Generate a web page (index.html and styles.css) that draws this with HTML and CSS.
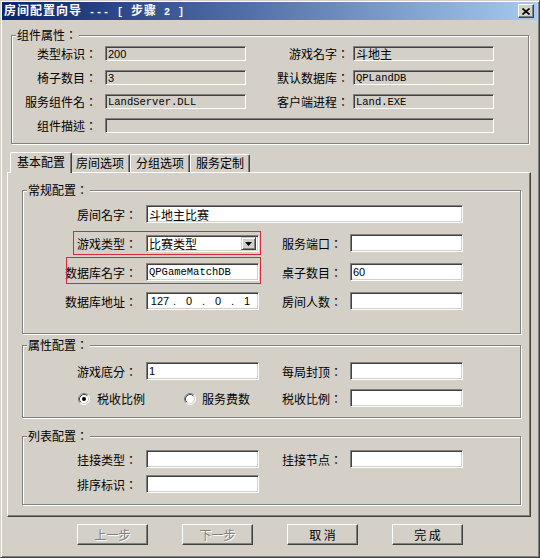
FILE: index.html
```html
<!DOCTYPE html>
<html>
<head>
<meta charset="utf-8">
<link rel="stylesheet" href="styles.css">
</head>
<body>
<div class="window">
  <div class="titlebar">
    <span class="title"><span class="tc">房间配置向导</span> --- [ <span class="tc">步骤</span> 2 ]</span>
    <span class="close"><svg width="8" height="7" viewBox="0 0 8 7"><path d="M0.5 0.5 L7.5 6.5 M7.5 0.5 L0.5 6.5" stroke="#000" stroke-width="1.6" fill="none"/></svg></span>
  </div>

  <div class="group group-top">
    <div class="group-title">组件属性：</div>
    <div class="grid grid-top">
      <div class="lbl">类型标识：</div><div class="field ro num">200</div>
      <div class="lbl lbl-r">游戏名字：</div><div class="field ro">斗地主</div>
      <div class="lbl">椅子数目：</div><div class="field ro num">3</div>
      <div class="lbl lbl-r">默认数据库：</div><div class="field ro mono">QPLandDB</div>
      <div class="lbl">服务组件名：</div><div class="field ro mono">LandServer.DLL</div>
      <div class="lbl lbl-r">客户端进程：</div><div class="field ro mono">Land.EXE</div>
      <div class="lbl">组件描述：</div><div class="field ro span3"></div>
    </div>
  </div>

  <div class="tabs">
    <div class="tab active">基本配置</div>
    <div class="tab">房间选项</div>
    <div class="tab">分组选项</div>
    <div class="tab">服务定制</div>
  </div>

  <div class="panel">
    <div class="group g-normal">
      <div class="group-title">常规配置：</div>
      <div class="grid grid-tab grid-normal">
        <div class="lbl">房间名字：</div><div class="field span3">斗地主比赛</div>
        <div class="lbl">游戏类型：</div>
        <div class="combo"><span class="combo-text">比赛类型</span><span class="combo-btn"><svg width="7" height="4" viewBox="0 0 7 4"><path d="M0 0 H7 L3.5 4 Z" fill="#000"/></svg></span></div>
        <div class="lbl lbl-r">服务端口：</div><div class="field"></div>
        <div class="lbl">数据库名字：</div><div class="field mono">QPGameMatchDB</div>
        <div class="lbl lbl-r">桌子数目：</div><div class="field num">60</div>
        <div class="lbl">数据库地址：</div>
        <div class="field ip num"><span class="seg">127</span><span class="dot">.</span><span class="seg">0</span><span class="dot">.</span><span class="seg">0</span><span class="dot">.</span><span class="seg">1</span></div>
        <div class="lbl lbl-r">房间人数：</div><div class="field"></div>
      </div>
      <div class="mark mark-1"></div>
      <div class="mark mark-2"></div>
    </div>

    <div class="group g-attr">
      <div class="group-title">属性配置：</div>
      <div class="grid grid-tab grid-attr">
        <div class="lbl">游戏底分：</div><div class="field num">1</div>
        <div class="lbl lbl-r">每局封顶：</div><div class="field"></div>
        <div class="radios">
          <span class="radio"><svg width="12" height="12" viewBox="0 0 12 12"><circle cx="6" cy="6" r="5" fill="#fff"/><path d="M2.11 9.89 A5.5 5.5 0 0 1 9.89 2.11" stroke="#808080" fill="none"/><path d="M9.89 2.11 A5.5 5.5 0 0 1 2.11 9.89" stroke="#fff" fill="none"/><path d="M2.82 9.18 A4.5 4.5 0 0 1 9.18 2.82" stroke="#404040" fill="none"/><path d="M9.18 2.82 A4.5 4.5 0 0 1 2.82 9.18" stroke="#D4D0C8" fill="none"/><circle cx="6" cy="6" r="2" fill="#000"/></svg><span>税收比例</span></span>
          <span class="radio radio-2"><svg width="12" height="12" viewBox="0 0 12 12"><circle cx="6" cy="6" r="5" fill="#fff"/><path d="M2.11 9.89 A5.5 5.5 0 0 1 9.89 2.11" stroke="#808080" fill="none"/><path d="M9.89 2.11 A5.5 5.5 0 0 1 2.11 9.89" stroke="#fff" fill="none"/><path d="M2.82 9.18 A4.5 4.5 0 0 1 9.18 2.82" stroke="#404040" fill="none"/><path d="M9.18 2.82 A4.5 4.5 0 0 1 2.82 9.18" stroke="#D4D0C8" fill="none"/></svg><span>服务费数</span></span>
        </div>
        <div class="lbl lbl-r">税收比例：</div><div class="field"></div>
      </div>
    </div>

    <div class="group g-list">
      <div class="group-title">列表配置：</div>
      <div class="grid grid-tab grid-list">
        <div class="lbl">挂接类型：</div><div class="field"></div>
        <div class="lbl lbl-r">挂接节点：</div><div class="field"></div>
        <div class="lbl">排序标识：</div><div class="field"></div>
      </div>
    </div>
  </div>

  <div class="buttons">
    <div class="btn disabled">上一步</div>
    <div class="btn disabled">下一步</div>
    <div class="btn">取 消</div>
    <div class="btn">完 成</div>
  </div>
</div>
</body>
</html>
```

FILE: styles.css
```css
* { box-sizing: border-box; }
html, body { margin: 0; padding: 0; }
body {
  width: 540px;
  height: 558px;
  background: #D4D0C8;
  font-family: "Noto Sans CJK SC", "Liberation Sans", sans-serif;
  font-size: 12px;
  color: #000;
  overflow: hidden;
}
.window {
  width: 540px;
  height: 558px;
  border: 1px solid;
  border-color: #D4D0C8 #404040 #404040 #D4D0C8;
  box-shadow: inset 1px 1px 0 #fff, inset -1px -1px 0 #808080;
  padding: 1px 2px 2px 1px;
  display: flex;
  flex-direction: column;
}
.titlebar {
  height: 18px;
  flex: none;
  background: linear-gradient(to right, #0A246A, #A6CAF0);
  display: flex;
  align-items: center;
  justify-content: space-between;
  padding: 0 3px 0 2px;
  color: #fff;
  font-weight: bold;
  line-height: 18px;
}
.title {
  white-space: pre;
  font-family: "Liberation Mono", "Noto Sans CJK SC", monospace;
  font-size: 10px;
  letter-spacing: 1px;
}
.title .tc {
  font-family: "Noto Sans CJK SC", sans-serif;
  font-size: 12px;
}
.close {
  width: 16px;
  height: 14px;
  background: #D4D0C8;
  border: 1px solid;
  border-color: #fff #404040 #404040 #fff;
  box-shadow: inset -1px -1px 0 #808080;
  display: flex;
  align-items: center;
  justify-content: center;
}
.close svg { display: block; margin-left: -1px; }

/* group boxes */
.group {
  position: relative;
  border: 1px solid #808080;
  box-shadow: 1px 1px 0 #fff, inset 1px 1px 0 #fff;
}
.group-title {
  margin: -8px 0 0 4px;
  padding: 0 2px 0 1px;
  height: 14px;
  line-height: 14px;
  width: max-content;
  background: #D4D0C8;
  font-family: "Noto Sans CJK TC", "Noto Sans CJK SC", sans-serif;
}
.group-top {
  margin: 15px 8px 0 9px;
  padding-bottom: 10px;
}
.grid { display: grid; }
.grid-top {
  margin-top: 4px;
  grid-template-columns: 93px 141px 107px 141px;
  grid-auto-rows: 15px;
  row-gap: 9px;
}
.lbl {
  display: flex;
  align-items: center;
  justify-content: flex-end;
  padding-right: 8px;
  white-space: nowrap;
  font-family: "Noto Sans CJK TC", "Noto Sans CJK SC", sans-serif;
}
.grid-top .lbl-r { padding-right: 4px; }
.span3 { grid-column: 2 / 5; }

.field {
  border: 1px solid;
  border-color: #808080 #fff #fff #808080;
  box-shadow: inset 1px 1px 0 #404040, inset -1px -1px 0 #D4D0C8;
  background: #fff;
  padding: 0 2px;
  display: flex;
  align-items: center;
  white-space: nowrap;
  overflow: hidden;
}
.field.ro { background: #D4D0C8; }
.mono { font-family: "Liberation Mono", "Noto Sans CJK SC", monospace; font-size: 10.5px; }
.num { font-family: "Liberation Sans", sans-serif; font-size: 11px; }

/* tabs */
.tabs {
  margin: 8px 6px 0 5px;
  padding-left: 3px;
  height: 20px;
  display: flex;
  align-items: flex-end;
  flex: none;
}
.tab {
  height: 18px;
  padding: 0 5px;
  background: #D4D0C8;
  border-top: 1px solid #fff;
  border-left: 1px solid #fff;
  border-right: 1px solid #404040;
  box-shadow: inset -1px 0 0 #808080;
  border-radius: 2px 2px 0 0;
  line-height: 16px;
  white-space: nowrap;
}
.tab.active {
  position: relative;
  z-index: 1;
  height: 21px;
  margin-bottom: -1px;
  margin-right: -2px;
  padding: 0 6px;
  line-height: 17px;
}

/* tab panel */
.panel {
  margin: 0 6px 0 5px;
  border: 1px solid;
  border-color: #fff #404040 #404040 #fff;
  box-shadow: inset -1px -1px 0 #808080;
  padding: 17px 9px 11px 14px;
  flex: none;
}
.grid-tab {
  grid-template-columns: 123px 113px 91px 113px;
  grid-auto-rows: 18px;
}
.grid-tab .lbl { padding-right: 9px; }
.grid-tab .lbl-r { padding-right: 8px; }
.g-normal { padding-bottom: 23px; }
.grid-normal { margin-top: 8px; row-gap: 11px; }
.g-attr { margin-top: 11px; padding-bottom: 10px; }
.grid-attr { margin-top: 10px; row-gap: 9px; }
.g-list { margin-top: 18px; padding-bottom: 11px; }
.grid-list { margin-top: 7px; row-gap: 7px; }

.combo {
  align-self: end;
  height: 17px;
  border: 1px solid;
  border-color: #808080 #fff #fff #808080;
  box-shadow: inset 1px 1px 0 #404040, inset -1px -1px 0 #D4D0C8;
  background: #fff;
  padding: 2px;
  display: flex;
  align-items: center;
}
.combo-text { flex: 1; line-height: 13px; }
.combo-btn {
  width: 15px;
  height: 13px;
  background: #D4D0C8;
  border: 1px solid;
  border-color: #D4D0C8 #404040 #404040 #D4D0C8;
  box-shadow: inset 1px 1px 0 #fff, inset -1px -1px 0 #808080;
  display: flex;
  align-items: center;
  justify-content: center;
}
.combo-btn svg { display: block; }

.ip { padding: 0 0 0 2px; }
.ip .seg { width: 22px; text-align: center; }
.ip .dot { width: 7px; text-align: center; }

.mark {
  position: absolute;
  border: 1px solid #D42A3C;
}
.mark-1 { left: 50px; top: 40px; width: 188px; height: 24px; }
.mark-2 { left: 43px; top: 66px; width: 195px; height: 27px; }

.radios {
  grid-column: 1 / 3;
  display: flex;
  align-items: center;
  padding-left: 55px;
  margin-top: 1px;
}
.radio { display: flex; align-items: center; gap: 7px; }
.radio svg { display: block; }
.radio-2 { margin-left: 39px; gap: 6px; }

/* buttons */
.buttons {
  margin-top: 7px;
  padding-left: 75px;
  display: flex;
  gap: 34px;
  flex: none;
}
.btn {
  width: 71px;
  height: 21px;
  background: #D4D0C8;
  border: 1px solid;
  border-color: #fff #404040 #404040 #fff;
  box-shadow: inset -1px -1px 0 #808080;
  display: flex;
  align-items: center;
  justify-content: center;
  white-space: pre;
}
.btn.disabled { color: #808080; text-shadow: 1px 1px 0 #fff; }
```
